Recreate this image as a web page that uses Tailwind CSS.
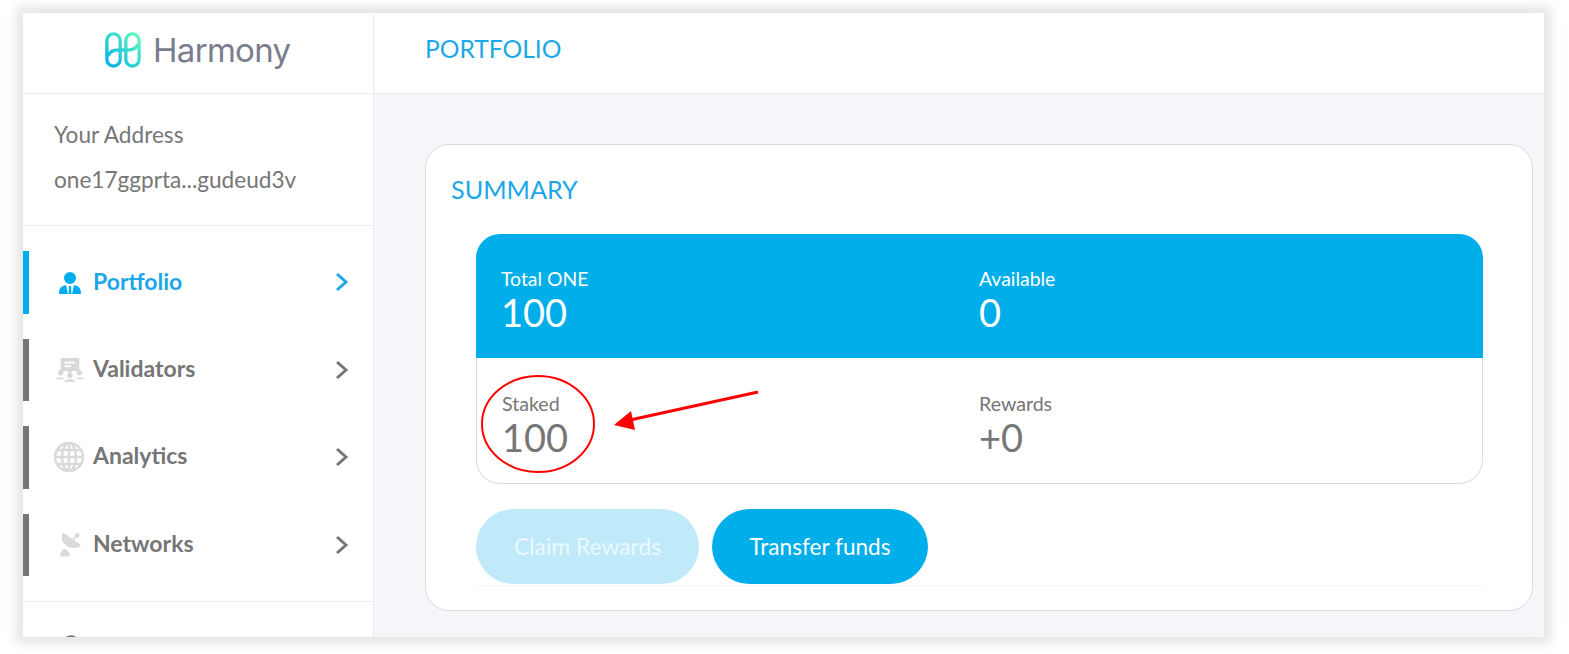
<!DOCTYPE html>
<html lang="en">
<head>
  <meta charset="UTF-8" />
  <title>Harmony Portfolio</title>
  <script src="https://cdn.jsdelivr.net/npm/@tailwindcss/browser@4"></script>
</head>
<body class="bg-white font-['Lato',sans-serif] text-[#767676]">
<div class="relative w-[1569px] h-[654px] overflow-hidden pt-[13px] pl-[23px]">
  <div class="w-[1521px] h-[624px] flex bg-[#f5f6fa] shadow-[0_0_8px_7px_rgba(0,0,0,0.07),0_0_22px_6px_rgba(0,0,0,0.04)]">
    <!-- Sidebar -->
    <aside class="w-[351px] h-full shrink-0 bg-white border-r border-[#ebebf0] overflow-hidden">
      <div class="h-[81px] border-b border-[#ebebf0] flex items-center pl-[80px] gap-[10px] pb-[6px]">
        <svg width="40" height="36" viewBox="0 0 40 38" fill="none" stroke-width="3.500">
          <defs>
            <linearGradient id="logoGrad" x1="0" y1="1" x2="1" y2="0">
              <stop offset="0" stop-color="#00aee9" />
              <stop offset="1" stop-color="#69fabd" />
            </linearGradient>
          </defs>
          <path stroke="url(#logoGrad)" d="M3 9a7 7 0 0 1 14 0v20a7 7 0 0 1-14 0zM23 9a7 7 0 0 1 14 0v20a7 7 0 0 1-14 0zM4 25c4-7 9-6 16-6s12 1 16-6" />
        </svg>
        <span class="text-[33px] leading-none text-[#7a7d8e] font-['Inter',sans-serif] tracking-[-0.7px]">Harmony</span>
      </div>
      <div class="h-[132px] border-b border-[#ebebf0] pl-[31px] pt-[26px] text-[22.6px] leading-[30px]">
        <p>Your Address</p>
        <p class="mt-[15px]">one17ggprta...gudeud3v</p>
      </div>
      <nav class="pt-[25px] h-[376px] border-b border-[#ebebf0] flex flex-col gap-[25px]">
        <a class="h-[62.5px] shrink-0 flex items-center border-l-[6px] border-[#00aeef] text-[#1ba7e8]">
          <span class="w-[30px] ml-[26px] flex justify-center">
            <svg width="24" height="23" viewBox="0 0 24 23" fill="#00aeef"><circle cx="12" cy="7" r="6" /><path d="M1 23c0-6 2-8 7-9l2 9zM23 23c0-6-2-8-7-9l-2 9zM11 15h2l.5 8h-3z" /></svg>
          </span>
          <span class="ml-[8px] mb-[3px] text-[23px] font-bold">Portfolio</span>
          <svg class="ml-auto mr-[24px]" width="14" height="20" viewBox="0 0 14 20" fill="none" stroke="#1ba7e8" stroke-width="3"><path d="M2 2l9 8-9 8" /></svg>
        </a>
        <a class="h-[62.5px] shrink-0 flex items-center border-l-[6px] border-[#767676]">
          <span class="w-[30px] ml-[26px] flex justify-center">
            <svg width="28" height="25" viewBox="0 0 30 27" fill="#d9d9d9" class="shrink-0"><path d="M5 1h20v14h-7l-3 3-3-3H5z" /><rect x="9" y="5" width="11" height="2" fill="#fff" /><rect x="9" y="9" width="7" height="2" fill="#fff" /><circle cx="5" cy="17" r="3" /><circle cx="25" cy="17" r="3" /><circle cx="15" cy="20" r="3" /><path d="M0 24c0-3 8-3 9 0zM21 24c1-3 9-3 9 0zM9 27c0-4 12-4 12 0z" /></svg>
          </span>
          <span class="ml-[8px] mb-[3px] text-[23px] font-bold">Validators</span>
          <svg class="ml-auto mr-[24px]" width="14" height="20" viewBox="0 0 14 20" fill="none" stroke="#767676" stroke-width="3"><path d="M2 2l9 8-9 8" /></svg>
        </a>
        <a class="h-[62.5px] shrink-0 flex items-center border-l-[6px] border-[#767676]">
          <span class="w-[30px] ml-[25px] flex justify-center">
            <svg width="30" height="30" viewBox="0 0 30 30" fill="none" stroke="#d9d9d9" stroke-width="2.500" class="shrink-0"><circle cx="15" cy="15" r="14" /><ellipse cx="15" cy="15" rx="7" ry="14" /><path d="M15 1v28M1 15h28M3.500 8h23M3.500 22h23" /></svg>
          </span>
          <span class="ml-[9px] mb-[4px] text-[23px] font-bold">Analytics</span>
          <svg class="ml-auto mr-[24px]" width="14" height="20" viewBox="0 0 14 20" fill="none" stroke="#767676" stroke-width="3"><path d="M2 2l9 8-9 8" /></svg>
        </a>
        <a class="h-[62.5px] shrink-0 flex items-center border-l-[6px] border-[#767676]">
          <span class="w-[30px] ml-[26px] flex justify-center">
            <svg width="21" height="25" viewBox="0 0 22 25" fill="#d9d9d9"><path d="M3 0c-4 8 2 17 14 16 2 0 3-1 5-3z" /><path d="M11 8l5-4 1 1-4 5z" /><circle cx="18" cy="3" r="2.500" /><path d="M0 25c0-5 3-7 5-8l3 2c2 2 2 4 2 6z" /></svg>
          </span>
          <span class="ml-[8px] mb-[3px] text-[23px] font-bold">Networks</span>
          <svg class="ml-auto mr-[24px]" width="14" height="20" viewBox="0 0 14 20" fill="none" stroke="#767676" stroke-width="3"><path d="M2 2l9 8-9 8" /></svg>
        </a>
      </nav>
      <div class="pl-[39px] pt-[33px]">
        <svg width="18" height="18" viewBox="0 0 18 18" fill="none" stroke="#767676" stroke-width="2.500"><circle cx="9" cy="9" r="7.500" /></svg>
      </div>
    </aside>
    <!-- Main -->
    <main class="flex-1 min-w-0 flex flex-col">
      <header class="h-[81px] shrink-0 bg-white border-b border-[#ebebf0] pl-[51px] pt-[20px]">
        <h1 class="text-[24.6px] leading-[32px] text-[#1ba7e8]">PORTFOLIO</h1>
      </header>
      <div class="pl-[51px] pr-[11px] pt-[50px]">
        <section class="h-[467px] bg-white border border-[#dcdcdc] rounded-[24px] pt-[28px] pl-[25px] pr-[49px]">
          <h2 class="text-[25.2px] leading-[33px] text-[#1ba7e8]">SUMMARY</h2>
          <div class="ml-[25px]">
            <div class="mt-[28px] h-[250px]">
              <div class="h-[124px] rounded-t-[24px] bg-[#00aeea] text-white grid grid-cols-[478px_1fr] pl-[25px] pt-[33px]">
                <div>
                  <p class="text-[19.4px] leading-[24px]">Total ONE</p>
                  <p class="text-[38px] leading-[43px]">100</p>
                </div>
                <div>
                  <p class="text-[19.4px] leading-[24px]">Available</p>
                  <p class="text-[38px] leading-[43px]">0</p>
                </div>
              </div>
              <div class="h-[126px] border-x border-b border-[#dcdcdc] rounded-b-[24px] grid grid-cols-[477px_1fr] pl-[25px] pt-[34px]">
                <div>
                  <p class="text-[19.6px] leading-[24px]">Staked</p>
                  <p class="text-[38px] leading-[43px]">100</p>
                </div>
                <div>
                  <p class="text-[19.6px] leading-[24px]">Rewards</p>
                  <p class="text-[38px] leading-[43px]">+0</p>
                </div>
              </div>
            </div>
            <div class="mt-[25px] pb-px border-b border-[#f5f5f5] flex gap-[13px]">
              <button class="w-[223px] h-[75px] rounded-full bg-[#c0eafa] text-white/70 text-[22.8px]">Claim Rewards</button>
              <button class="w-[216px] h-[75px] rounded-full bg-[#00aeea] text-white text-[22.6px]">Transfer funds</button>
            </div>
          </div>
        </section>
      </div>
    </main>
  </div>
  <!-- Red annotation drawn over the screenshot -->
  <svg class="absolute left-0 top-0 pointer-events-none" width="1569" height="654" fill="none">
    <ellipse cx="538" cy="424" rx="56" ry="48" stroke="#f00" stroke-width="2" />
    <path d="M758 392L630 420" stroke="#f00" stroke-width="3" />
    <path d="M614 425L631 411L635 430z" fill="#f00" />
  </svg>
</div>
</body>
</html>
